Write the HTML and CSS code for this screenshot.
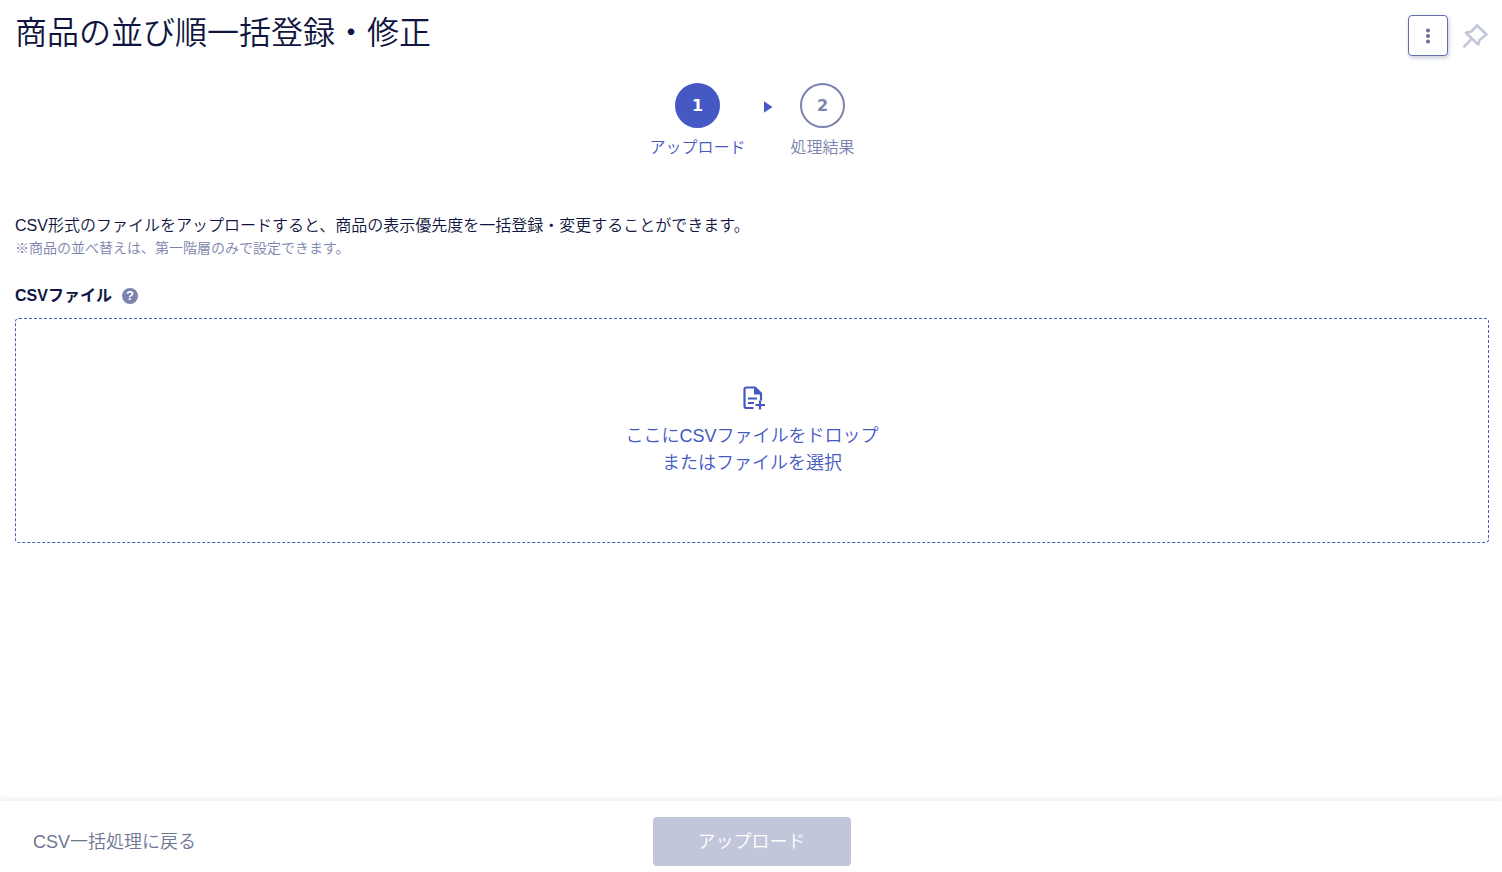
FILE: index.html
```html
<!DOCTYPE html>
<html lang="ja">
<head>
    <meta charset="UTF-8">
    <meta name="viewport" content="width=device-width, initial-scale=1.0">
    <title>商品の並び順一括登録・修正</title>
    <link rel="stylesheet" href="styles.css">
</head>
<body>
    <header class="page-header">
        <h1>商品の並び順一括登録・修正</h1>
        <div class="header-actions">
            <button type="button" class="menu-button" aria-label="メニュー">
                <svg width="6" height="16" viewBox="0 0 6 16" fill="currentColor">
                    <circle cx="3" cy="2.5" r="2"/>
                    <circle cx="3" cy="8" r="2"/>
                    <circle cx="3" cy="13.5" r="2"/>
                </svg>
            </button>
            <button type="button" class="pin-button" aria-label="ピン留め">
                <svg width="26" height="26" viewBox="0 0 26 26" fill="none" stroke="currentColor" stroke-width="2.6" stroke-linejoin="round">
                    <path d="M15 2.5 24.5 11.5 17.5 17 16.3 21.5 3.8 9.8 9.3 8.6Z"/>
                    <path d="M9.6 15.8 1.5 24.4"/>
                </svg>
            </button>
        </div>
    </header>

    <main>
        <ol class="steps">
            <li class="step active">
                <span class="step-number">1</span>
                <span>アップロード</span>
            </li>
            <li class="step-arrow" aria-hidden="true"></li>
            <li class="step">
                <span class="step-number">2</span>
                <span>処理結果</span>
            </li>
        </ol>

        <p class="lead">CSV形式のファイルをアップロードすると、商品の表示優先度を一括登録・変更することができます。</p>
        <p class="note">※商品の並べ替えは、第一階層のみで設定できます。</p>

        <div class="field-title">
            <label for="csvFile">CSVファイル</label>
            <button type="button" class="help-button" aria-label="ヘルプ">?</button>
        </div>
        <label class="dropzone" for="csvFile">
            <svg width="28" height="26" viewBox="-4 0 28 26" fill="none" stroke="currentColor" stroke-width="2.2">
                <path d="M11.5 23H4.5Q2.5 23 2.5 21V4.5Q2.5 2.5 4.5 2.5H13L19 8.5V15.5"/>
                <path d="M12 2V9.5H20Z" fill="currentColor" stroke="none"/>
                <path d="M6 13.5H15M6 18H12"/>
                <path d="M18 15.5V24.5M13.5 20H23"/>
            </svg>
            <span>ここにCSVファイルをドロップ<br>またはファイルを選択</span>
        </label>
        <input type="file" id="csvFile" class="file-input" accept=".csv">
    </main>

    <footer class="page-footer">
        <a href="#" class="back-link">CSV一括処理に戻る</a>
        <button type="submit" class="upload-button" disabled>アップロード</button>
    </footer>
</body>
</html>
```
FILE: styles.css
```css
* {
    box-sizing: border-box;
}
body {
    display: flex;
    flex-direction: column;
    min-height: 100vh;
    margin: 0;
    background-color: white;
    color: #0f1540;
    font-family: "Liberation Sans", "Noto Sans CJK JP", sans-serif;
    font-size: 16px;
    font-weight: 350;
    line-height: 24px;
}
h1, p, ol {
    margin: 0;
    padding: 0;
}
button {
    padding: 0;
    border: none;
    background: none;
    font: inherit;
    cursor: pointer;
}
svg {
    display: block;
}
.page-header {
    display: flex;
    justify-content: space-between;
    padding: 15px 14px 0 15px;
}
h1 {
    font-size: 32px;
    font-weight: 350;
    line-height: 36px;
}
.header-actions {
    display: flex;
    align-items: center;
    gap: 14px;
}
.menu-button {
    display: flex;
    align-items: center;
    justify-content: center;
    width: 40px;
    height: 41px;
    border: 1px solid #646da6;
    border-radius: 4px;
    background-color: white;
    color: #646da6;
    box-shadow: 1px 2px 4px rgba(60, 80, 120, 0.3);
}
.pin-button {
    color: #c1c6da;
}
main {
    flex: 1;
    padding: 27px 13px 24px 15px;
}
.steps {
    display: flex;
    justify-content: center;
    gap: 18px;
    list-style: none;
}
.step {
    display: flex;
    flex-direction: column;
    align-items: center;
    gap: 8px;
    color: #7b83ae;
}
.step-number {
    display: flex;
    align-items: center;
    justify-content: center;
    width: 45px;
    height: 45px;
    border: 2px solid #7b83ae;
    border-radius: 50%;
    font-family: "DejaVu Sans", sans-serif;
    font-weight: bold;
}
.step.active {
    color: #4558c4;
}
.active .step-number {
    border-color: #4558c4;
    background-color: #4558c4;
    color: white;
}
.step-arrow {
    margin-top: 18px;
    width: 9px;
    height: 12px;
    background-color: #4558c4;
    clip-path: polygon(0 0, 100% 50%, 0 100%);
}
.lead {
    margin-top: 54px;
}
.note {
    color: #7b83ae;
    font-size: 14px;
    line-height: 20px;
}
.field-title {
    display: flex;
    align-items: center;
    gap: 10px;
    margin: 26px 0 10px;
    font-weight: bold;
}
.help-button {
    width: 16px;
    height: 16px;
    border-radius: 50%;
    background-color: #7b83ae;
    color: white;
    font-size: 13px;
    line-height: 16px;
}
.dropzone {
    display: flex;
    flex-direction: column;
    align-items: center;
    justify-content: center;
    gap: 12px;
    min-height: 225px;
    border: 1px dashed #4558c4;
    border-radius: 4px;
    color: #4558c4;
    font-size: 18px;
    line-height: 27px;
    text-align: center;
    cursor: pointer;
}
.file-input {
    position: absolute;
    width: 1px;
    height: 1px;
    opacity: 0;
}
.page-footer {
    position: sticky;
    bottom: 0;
    display: grid;
    grid-template-columns: 1fr auto 1fr;
    align-items: center;
    padding: 16px 32px 6px 33px;
    background-color: white;
    box-shadow: 0 0 8px rgba(0, 0, 0, 0.12);
    font-size: 18px;
}
.back-link {
    color: #6f7694;
    text-decoration: none;
}
.upload-button {
    width: 198px;
    height: 49px;
    border-radius: 4px;
    background-color: #c1c6da;
    color: white;
    cursor: default;
}
```
